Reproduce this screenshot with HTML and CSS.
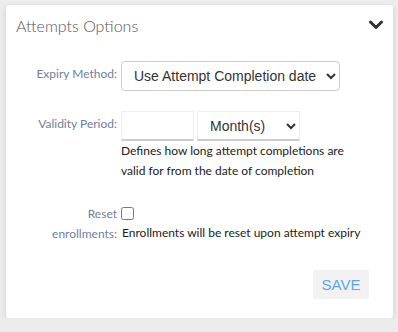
FILE: index.html
```html
<!doctype html>
<html lang="en">
    <head>
        <meta charset="UTF-8" />
        <meta name="viewport" content="width=device-width, initial-scale=1.0" />
        <title>Attempts Options</title>
        <link rel="stylesheet" href="styles.css">
    </head>
    <body>
        <div class="card">
            <div class="card-header">
                <h2>Attempts Options</h2>
                <svg class="toggle" width="16" height="12" viewBox="0 0 16 12">
                    <path d="M2.5 3 L8 8.5 L13.5 3" fill="none" stroke="#333" stroke-width="3" stroke-linecap="round" stroke-linejoin="round" />
                </svg>
            </div>
            <div class="form">
                <div class="form-row">
                    <label class="form-label" for="expiryMethod">Expiry Method:</label>
                    <div class="form-control">
                        <select id="expiryMethod" class="select-main">
                            <option>Use Attempt Completion date</option>
                            <option>Use Fixed date</option>
                        </select>
                    </div>
                </div>
                <div class="form-row">
                    <label class="form-label" for="validity">Validity Period:</label>
                    <div class="form-control">
                        <div class="inline-group">
                            <input type="text" id="validity" class="input-flat" />
                            <select class="select-flat">
                                <option>Month(s)</option>
                                <option>Day(s)</option>
                                <option>Year(s)</option>
                            </select>
                        </div>
                        <p class="help">Defines how long attempt completions are valid for from the date of completion</p>
                    </div>
                </div>
                <div class="form-row">
                    <label class="form-label label-reset" for="resetEnrollments">Reset enrollments:</label>
                    <div class="form-control">
                        <input type="checkbox" id="resetEnrollments" class="checkbox" />
                        <p class="help help-reset">Enrollments will be reset upon attempt expiry</p>
                    </div>
                </div>
            </div>
            <div class="actions">
                <button class="button-save">SAVE</button>
            </div>
        </div>
    </body>
</html>
```

FILE: styles.css
```css
body {
    margin: 0;
    padding: 5px 5px 0 6px;
    background: #ececec;
    font-family: Lato, "Liberation Sans", sans-serif;
}
.card {
    background: #ffffff;
    width: 387px;
    height: 313px;
    box-sizing: border-box;
    border-radius: 3px;
    box-shadow: 0 2px 6px rgba(0, 0, 0, 0.12);
}
.card-header {
    display: flex;
    justify-content: space-between;
    align-items: center;
    padding: 5px 9px 0 10px;
    height: 30px;
}
.card-header h2 {
    margin: 0;
    font-size: 16px;
    font-weight: 300;
    color: #555;
}
.toggle {
    display: block;
    margin-top: -1px;
}
.form {
    padding-top: 21px;
}
.form-row {
    display: flex;
    gap: 4px;
    margin-bottom: 20px;
}
.form-label {
    width: 90px;
    margin-left: 21px;
    flex: none;
    text-align: right;
    font-size: 12px;
    line-height: 20px;
    padding-top: 3px;
    color: #717f9c;
}
.label-reset {
    padding-top: 3px;
}
.form-control {
    width: 240px;
}
.select-main {
    width: 219px;
    height: 30px;
    font-family: "Liberation Sans", Arial, sans-serif;
    font-size: 14px;
    color: #333;
    background: #fff;
    border: 1px solid #ccc;
    border-radius: 4px;
    padding: 0 4px 0 8px;
}
.inline-group {
    display: flex;
    gap: 3px;
}
.input-flat {
    width: 73px;
    height: 30px;
    box-sizing: border-box;
    border: 1px solid #eee;
    border-bottom: 2px solid #ccc;
    padding: 0 6px;
    font-size: 14px;
}
.select-flat {
    width: 103px;
    height: 30px;
    box-sizing: border-box;
    font-family: "Liberation Sans", Arial, sans-serif;
    font-size: 14px;
    color: #333;
    background: #fff;
    border: 1px solid #eee;
    border-bottom: 2px solid #ccc;
    border-radius: 0;
    padding: 0 4px 0 8px;
}
.help {
    margin: 0;
    font-size: 12px;
    line-height: 20px;
    color: #222;
}
.help-reset {
    margin-left: 1px;
}
.checkbox {
    display: block;
    width: 13px;
    height: 13px;
    margin: 6px 0 3px 0;
}
.actions {
    display: flex;
    justify-content: flex-end;
    padding: 6px 24px 0 0;
}
.button-save {
    width: 56px;
    height: 29px;
    font-family: "Liberation Sans", Arial, sans-serif;
    font-size: 15px;
    color: #5ba8e6;
    background-color: #f2f2f2;
    border: none;
    border-radius: 2px;
    cursor: pointer;
}
```
